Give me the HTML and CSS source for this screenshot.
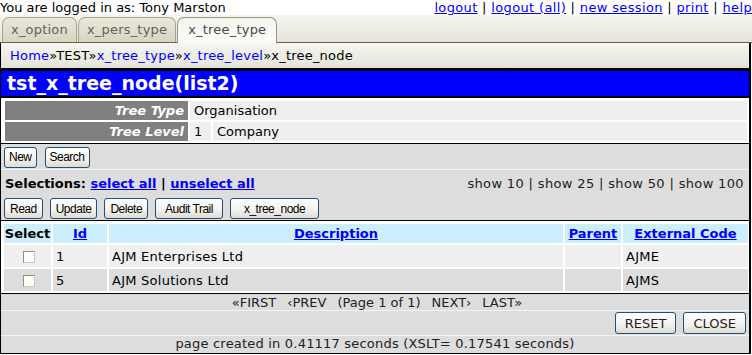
FILE: index.html
```html
<!DOCTYPE html>
<html lang="en">
<head>
<meta charset="UTF-8">
<title>tst_x_tree_node(list2)</title>
<link rel="stylesheet" href="styles.css">
</head>
<body>

<!-- session line -->
<div class="topbar">
  <span>You are logged in as: Tony Marston</span>
  <span class="session-links">
    <a href="#">logout</a> | <a href="#">logout (all)</a> | <a href="#">new session</a> | <a href="#">print</a> | <a href="#">help</a>
  </span>
</div>

<!-- menu tabs -->
<div class="tabs">
  <a class="tab" href="#">x_option</a>
  <a class="tab" href="#">x_pers_type</a>
  <a class="tab active" href="#">x_tree_type</a>
</div>

<div class="frame">

  <!-- breadcrumbs -->
  <div class="crumbs">
    <a href="#">Home</a>»TEST»<a href="#">x_tree_type</a>»<a href="#">x_tree_level</a>»x_tree_node
  </div>

  <h1 class="title">tst_x_tree_node(list2)</h1>

  <!-- parent entity -->
  <div class="outer">
    <div class="field">
      <div class="label">Tree Type</div>
      <div class="value">Organisation</div>
    </div>
    <div class="field">
      <div class="label">Tree Level</div>
      <div class="value num">1</div>
      <div class="value">Company</div>
    </div>
  </div>

  <!-- navigation buttons -->
  <div class="navbar">
    <button class="btn">New</button>
    <button class="btn">Search</button>
  </div>

  <!-- action bar -->
  <div class="actionbar">
    <div class="selections">
      <div class="select-links">Selections: <a href="#">select all</a> | <a href="#">unselect all</a></div>
      <div class="show">show 10 | show 25 | show 50 | show 100</div>
    </div>
    <div class="buttons">
      <button class="btn">Read</button>
      <button class="btn">Update</button>
      <button class="btn">Delete</button>
      <button class="btn audit">Audit Trail</button>
      <button class="btn wide">x_tree_node</button>
    </div>
  </div>

  <!-- inner entity -->
  <table class="data">
    <colgroup>
      <col class="c-select">
      <col class="c-id">
      <col class="c-desc">
      <col class="c-parent">
      <col class="c-ext">
    </colgroup>
    <thead>
      <tr>
        <th>Select</th>
        <th><a href="#">Id</a></th>
        <th><a href="#">Description</a></th>
        <th><a href="#">Parent</a></th>
        <th><a href="#">External Code</a></th>
      </tr>
    </thead>
    <tbody>
      <tr class="odd">
        <td class="chk"><input type="checkbox"></td>
        <td>1</td>
        <td>AJM Enterprises Ltd</td>
        <td></td>
        <td>AJME</td>
      </tr>
      <tr class="even">
        <td class="chk"><input type="checkbox"></td>
        <td>5</td>
        <td>AJM Solutions Ltd</td>
        <td></td>
        <td>AJMS</td>
      </tr>
    </tbody>
  </table>

  <div class="pagination">
    <span>«FIRST</span><span>‹PREV</span><span>(Page 1 of 1)</span><span>NEXT›</span><span>LAST»</span>
  </div>

  <div class="submit">
    <button class="btn big">RESET</button>
    <button class="btn big">CLOSE</button>
  </div>

  <div class="timer">page created in 0.41117 seconds (XSLT= 0.17541 seconds)</div>

</div>

</body>
</html>
```

FILE: styles.css
```css
/* ====== base ====== */
*{box-sizing:border-box;}
body{
  margin:0;
  background:#fff;
  color:#000;
  font-family:"DejaVu Sans",Verdana,sans-serif;
  font-size:13px;
}
a{color:#0000ff;}

/* ====== session line ====== */
.topbar{
  display:flex;
  justify-content:space-between;
  height:15px;
  line-height:15px;
  white-space:nowrap;
}
.session-links{letter-spacing:.35px;}

/* ====== tabs ====== */
.tabs{
  display:flex;
  align-items:flex-end;
  gap:1px;
  height:28px;
  padding-left:2px;
  background:linear-gradient(#f5f6f1,#e9e9e0 70%,#e4e3d8);
  border-bottom:1px solid #6f5f48;
}
.tab{
  height:25px;
  line-height:24px;
  padding:0 8px;
  letter-spacing:.2px;
  color:#62625a;
  text-decoration:none;
  border:1px solid #aaa28a;
  border-bottom:none;
  border-radius:7px 7px 0 0;
  background:linear-gradient(#ebe8dc,#d9d4c0);
}
.tab.active{
  height:26px;
  margin-bottom:-1px;
  padding:0 10px;
  color:#4a4a44;
  border-color:#9c9278;
  background:linear-gradient(#f4f4ee,#fbfbf9);
}

/* ====== frame ====== */
.frame{
  width:751px;
  border:solid #000;
  border-width:0 2px 1px 1px;
}
.crumbs{
  height:26px;
  line-height:25px;
  padding-left:9px;
  letter-spacing:.2px;
  background:linear-gradient(#f5f6f1,#e9e9e0 70%,#e4e3d8);
  border-bottom:1px solid #000;
}
.crumbs a{text-decoration:none;}

.title{
  margin:0;
  height:29px;
  line-height:25px;
  padding-left:6px;
  font-size:19px;
  font-weight:bold;
  color:#fff;
  background:#0000ff;
  border-top:2px solid #000;
  border-bottom:2px solid #000;
}

/* ====== parent fields ====== */
.outer{
  display:flex;
  flex-direction:column;
  gap:2px;
  padding:3px 2px 2px 4px;
}
.field{
  display:flex;
  gap:2px;
  height:19px;
  line-height:19px;
}
.label{
  width:183px;
  padding-right:4px;
  text-align:right;
  font-weight:bold;
  font-style:italic;
  color:#fff;
  background:#808080;
}
.value{
  flex:1;
  padding-left:4px;
  background:#efefef;
}
.value.num{flex:0 0 21px;}

/* ====== navigation bar ====== */
.navbar{
  display:flex;
  align-items:center;
  gap:8px;
  height:27px;
  padding:1px 3px 0;
  background:#dddddd;
  border-top:1px solid #000;
  border-bottom:1px solid #f4f4f4;
}
.navbar .btn{padding:0 4px;}

/* ====== action bar ====== */
.actionbar{
  background:#dddddd;
  border-bottom:1px solid #000;
}
.selections{
  display:flex;
  justify-content:space-between;
  align-items:center;
  height:26px;
  padding:1px 5px 0 4px;
}
.select-links{font-weight:bold;}
.show{color:#222;letter-spacing:.35px;}
.buttons{
  display:flex;
  gap:7px;
  padding:2px 3px 1px;
}

/* ====== buttons ====== */
.btn{
  height:21px;
  padding:0 5px;
  font-family:"Liberation Sans",Arial,sans-serif;
  font-size:12px;
  letter-spacing:-.5px;
  color:#000;
  background:linear-gradient(#ffffff,#f4f3ee 55%,#dedbcf);
  border:1px solid #1d4f7f;
  border-radius:3px;
  cursor:pointer;
}
.btn.audit{padding:0 9px;}
.btn.wide{padding:0 13px;}
.btn.big{
  height:22px;
  padding:0 9px;
  font-family:"DejaVu Sans",Verdana,sans-serif;
  font-size:13px;
  letter-spacing:0;
  color:#222;
}

/* ====== data table ====== */
.data{
  width:748px;
  margin:1px 0 0 1px;
  border-spacing:2px;
  table-layout:fixed;
}
.c-select{width:47px;}
.c-id{width:54px;}
.c-parent{width:56px;}
.c-ext{width:125px;}
.data th{
  height:19px;
  padding:0;
  font-weight:bold;
  text-align:center;
  background:#cdeefd;
}
.data td{
  height:22px;
  padding:0 3px;
  letter-spacing:.25px;
}
.data tr.odd td{background:#efefef;}
.data tr.even td{background:#dddddd;}
.data td.chk{text-align:center;}
.chk input{
  appearance:none;
  -webkit-appearance:none;
  width:12px;
  height:12px;
  margin:0 0 0 2px;
  vertical-align:middle;
  background:#fffff6;
  border:1px solid #8f8f8f;
  border-right-color:#c8c8c8;
  border-bottom-color:#c8c8c8;
}

/* ====== bottom rows ====== */
.pagination{
  display:flex;
  justify-content:center;
  gap:11px;
  height:18px;
  line-height:17px;
  padding-left:4px;
  color:#222;
  background:#dddddd;
  border-top:1px solid #000;
  border-bottom:1px solid #f4f4f4;
}
.submit{
  display:flex;
  justify-content:flex-end;
  align-items:center;
  gap:7px;
  height:25px;
  padding-right:3px;
  background:#dddddd;
  border-bottom:1px solid #f4f4f4;
}
.timer{
  height:17px;
  line-height:16px;
  text-align:center;
  letter-spacing:.2px;
  color:#222;
  background:#dddddd;
}
```
